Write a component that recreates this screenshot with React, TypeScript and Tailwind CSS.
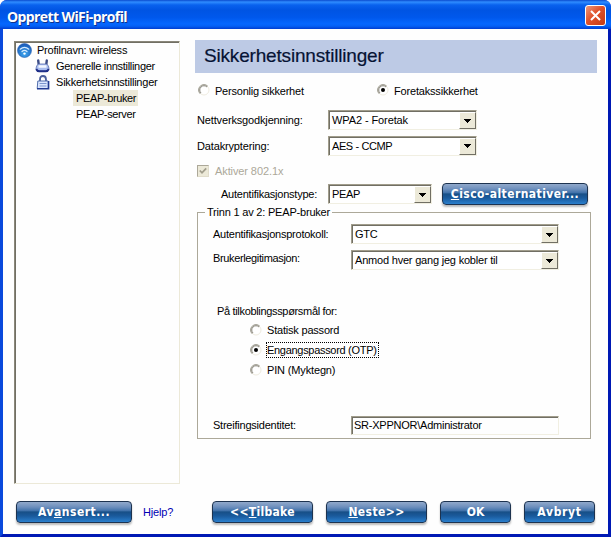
import { useState } from "react";
import type { ReactNode } from "react";
import clsx from "clsx";

function Label({ children, className }: { children: ReactNode; className?: string }) {
  return <span className={clsx("block whitespace-nowrap", className)}>{children}</span>;
}

function Select({ value, className }: { value: string; className?: string }) {
  return (
    <div
      className={clsx(
        "flex shrink-0 border border-t-[#a19d8c] border-l-[#a19d8c] border-r-[#f1efe2] border-b-[#f1efe2] bg-white",
        className
      )}
    >
      <div className="flex min-w-0 flex-1 items-center border-t border-l border-[#716f64] pl-[2px]">
        <span className="flex-1 whitespace-nowrap">{value}</span>
        <span className="flex h-full w-[17px] items-center justify-center border border-t-white border-l-white border-r-[#716f64] border-b-[#716f64] bg-[#ece9d8]">
          <svg width="7" height="4" viewBox="0 0 7 4" shapeRendering="crispEdges">
            <path d="M0 0h7v1H6v1H5v1H4v1H3V3H2V2H1V1H0z" fill="#000" />
          </svg>
        </span>
      </div>
    </div>
  );
}

type RadioProps = {
  label: string;
  checked: boolean;
  onSelect: () => void;
  className?: string;
  focused?: boolean;
};

function Radio({ label, checked, onSelect, className, focused }: RadioProps) {
  return (
    <button type="button" onClick={onSelect} className={clsx("flex items-center", className)}>
      <svg width="12" height="12" viewBox="0 0 12 12" className="mb-px shrink-0">
        <circle cx="6" cy="6" r="5" fill="#fff" stroke="#eeebdf" />
        <path d="M2.2 9.8A5.3 5.3 0 0 1 9.8 2.2" fill="none" stroke="#99978b" />
        <path d="M3 9A4.2 4.2 0 0 1 9 3" fill="none" stroke="#6d6b61" strokeWidth=".8" />
        {checked && <circle cx="6" cy="6" r="2" fill="#000" />}
      </svg>
      <span
        className={clsx(
          "ml-[4px] whitespace-nowrap pr-px leading-[14px]",
          focused ? "border border-dotted border-black" : "border border-transparent"
        )}
      >
        {label}
      </span>
    </button>
  );
}

function GlossyButton({ children, className }: { children: ReactNode; className?: string }) {
  return (
    <button
      type="button"
      className={clsx(
        "flex h-[22px] shrink-0 items-center justify-center whitespace-nowrap rounded-[4px] border border-[#1d3350] bg-[linear-gradient(#91a9cb_0%,#6d8fbd_25%,#4273ab_43%,#174f87_50%,#1a5a9c_70%,#2a7fcd_100%)] font-['DejaVu_Sans_Condensed','DejaVu_Sans',sans-serif] text-[12px] font-bold text-white shadow-[0_2px_2px_#bbb]",
        className
      )}
    >
      {children}
    </button>
  );
}

function WifiIcon() {
  return (
    <svg width="15" height="15" viewBox="0 0 15 15">
      <defs>
        <radialGradient id="ball" cx=".5" cy=".75" r=".7">
          <stop offset="0" stopColor="#3ba5ee" />
          <stop offset="1" stopColor="#1a5cba" />
        </radialGradient>
      </defs>
      <circle cx="7.5" cy="7.5" r="7" fill="url(#ball)" stroke="#2860b0" strokeWidth=".6" />
      <g fill="none" stroke="#d4eaff" strokeWidth="1.2" strokeLinecap="round">
        <path d="M3.2 6.2Q7.5 2.4 11.8 6.2" />
        <path d="M5 8.5Q7.5 6.2 10 8.5" />
      </g>
      <circle cx="7.5" cy="10.6" r="1.2" fill="#fff" />
    </svg>
  );
}

function AdapterIcon() {
  return (
    <svg width="15" height="15" viewBox="0 0 15 15">
      <path
        d="M3.2 1.5l.6 4.500M11.800 1.500l-.6 4.500"
        stroke="#3c4c86"
        strokeWidth="2.400"
        strokeLinecap="round"
      />
      <path
        d="M3.5 5h8q2.500 1.500 2.500 4.500l-1.500 2.500h-10L1 9.500q0-3 2.500-4.500z"
        fill="#a9bdf0"
        stroke="#5a70ae"
        strokeWidth=".8"
      />
      <path d="M3.500 7.500h8" stroke="#f4f8ff" strokeWidth="2.400" />
      <path d="M1.200 10q1 2.300 3 2.300h6.600q2 0 3-2.300" fill="none" stroke="#1f2f88" strokeWidth="2" />
    </svg>
  );
}

function LockIcon() {
  return (
    <svg width="14" height="15" viewBox="0 0 14 15">
      <path d="M4 7V4.500Q4 1 7 1T10 4.500V7" fill="none" stroke="#4a5f9c" strokeWidth="1.800" />
      <path d="M1.800 6h10.400v7.500H1.200z" fill="#dbe7ff" stroke="#526fac" />
      <path d="M3.500 8.500h7M3.500 11h7" stroke="#7c96cd" />
      <path d="M12.600 6v7.700H1" fill="none" stroke="#213b93" strokeWidth="1.500" />
    </svg>
  );
}

function ProfileTree() {
  return (
    <div className="h-[443px] w-[166px] shrink-0 border border-t-[#8a877a] border-l-[#8a877a] border-r-[#ece9d8] border-b-[#ece9d8]">
      <div className="h-full border-t border-l border-[#716f64]">
        <div className="flex h-[15px] items-center pl-px">
          <WifiIcon />
          <Label className="ml-[5px] tracking-[-0.23px]">Profilnavn: wireless</Label>
        </div>
        <div className="flex h-4 items-center pl-[19px]">
          <AdapterIcon />
          <Label className="ml-[6px] tracking-[-0.3px]">Generelle innstillinger</Label>
        </div>
        <div className="flex h-4 items-center pl-[20px]">
          <LockIcon />
          <Label className="ml-[6px] tracking-[-0.21px]">Sikkerhetsinnstillinger</Label>
        </div>
        <div className="flex h-4 items-center pl-[57px]">
          <Label className="bg-[#ece9d8] pr-[2px] pl-[3px] leading-4 tracking-[-0.37px]">
            PEAP-bruker
          </Label>
        </div>
        <div className="flex h-4 items-center pl-[60px]">
          <Label className="tracking-[-0.37px]">PEAP-server</Label>
        </div>
      </div>
    </div>
  );
}

export default function App() {
  const [security, setSecurity] = useState("enterprise");
  const [prompt, setPrompt] = useState("otp");

  return (
    <div className="flex h-[537px] w-[611px] flex-col overflow-hidden rounded-t-[7px] bg-[#0831d9] font-['Liberation_Sans',Arial,sans-serif] text-[11px] text-black">
      <header className="flex h-[29px] shrink-0 items-center justify-between bg-[linear-gradient(#0a4bce_0%,#2f8cff_7%,#0962ee_17%,#0054e3_35%,#0058ec_60%,#0567fe_82%,#0460f5_90%,#003dd0_100%)] pr-[5px] pl-[7px]">
        <h1 className="pt-[3px] font-['Open_Sans','Noto_Sans',sans-serif] text-[14px] font-bold tracking-[-0.6px] text-white [text-shadow:1px_1px_#10338c]">
          Opprett WiFi-profil
        </h1>
        <button
          type="button"
          className="mt-[2px] flex h-[21px] w-[21px] items-center justify-center rounded-[3px] border border-white bg-[linear-gradient(135deg,#eb987d,#e0522b_45%,#c53a14)]"
        >
          <svg width="13" height="13" viewBox="0 0 13 13">
            <path d="M2 2l9 9M11 2l-9 9" stroke="#fff" strokeWidth="2" />
          </svg>
        </button>
      </header>

      <main className="flex min-h-0 flex-1 flex-col border-x-[3px] border-b-[3px] border-l-[#0a49dc] border-r-[#0019b4] border-b-[#0019b4] bg-[#fefefe]">
        <div className="flex pl-[11px]">
          <div className="pt-[12px]">
            <ProfileTree />
          </div>

          <section className="ml-[15px] w-[402px] pt-[11px]">
            <h2 className="flex h-[33px] items-center bg-[#bdcae5] pl-[9px] text-[19px] tracking-[-0.18px] text-[#061334] [-webkit-text-stroke:0.2px_#061334]">
              Sikkerhetsinnstillinger
            </h2>

            <div className="flex h-[35px] items-center pl-[3px]">
              <Radio
                label="Personlig sikkerhet"
                checked={security === "personal"}
                onSelect={() => setSecurity("personal")}
                className="w-[179px] tracking-[-0.22px]"
              />
              <Radio
                label="Foretakssikkerhet"
                checked={security === "enterprise"}
                onSelect={() => setSecurity("enterprise")}
                className="tracking-[-0.18px]"
              />
            </div>

            <div className="flex h-6 items-center pl-[2px]">
              <Label className="w-[131px] tracking-[-0.15px]">Nettverksgodkjenning:</Label>
              <Select value="WPA2 - Foretak" className="h-5 w-[149px] tracking-[-0.1px]" />
            </div>
            <div className="flex h-[27px] items-center pl-[2px]">
              <Label className="w-[131px] pt-px tracking-[-0.15px]">Datakryptering:</Label>
              <Select value="AES - CCMP" className="h-5 w-[149px] tracking-[-0.4px]" />
            </div>

            <div className="flex h-6 items-center pl-[2px] text-[#aca899]">
              <span className="flex h-[12px] w-[12px] items-center justify-center border border-t-[#aca899] border-l-[#aca899] border-r-[#e0dccb] border-b-[#e0dccb] bg-[#ece9d8]">
                <svg width="8" height="8" viewBox="0 0 8 8">
                  <path d="M.8 3.5L3 5.8 7.2 1.4" fill="none" stroke="#a19d8c" strokeWidth="1.8" />
                </svg>
              </span>
              <Label className="ml-[6px] tracking-[-0.1px]">Aktiver 802.1x</Label>
            </div>

            <div className="flex h-[22px] items-center pl-[26px]">
              <Label className="w-[107px] tracking-[-0.23px]">Autentifikasjonstype:</Label>
              <Select value="PEAP" className="h-5 w-[104px] tracking-[-0.3px]" />
              <GlossyButton className="ml-[10px] w-[146px] tracking-[0.43px]">
                <span className="underline">C</span>isco-alternativer...
              </GlossyButton>
            </div>

            <fieldset className="ml-[2px] h-[234px] w-[394px] border border-[#aca899]">
              <legend className="ml-[7px] h-[14px] px-[2px] leading-[14px] tracking-[-0.2px]">
                Trinn 1 av 2: PEAP-bruker
              </legend>
              <div className="mt-[5px] flex h-5 items-center pl-[15px]">
                <Label className="w-[138px] tracking-[-0.24px]">Autentifikasjonsprotokoll:</Label>
                <Select value="GTC" className="h-5 w-[208px] tracking-[-0.3px]" />
              </div>
              <div className="mt-[6px] flex h-5 items-center pl-[15px]">
                <Label className="w-[138px] pb-1 tracking-[-0.36px]">Brukerlegitimasjon:</Label>
                <Select
                  value="Anmod hver gang jeg kobler til"
                  className="h-5 w-[208px] tracking-[-0.2px]"
                />
              </div>

              <Label className="mt-[33px] ml-[19px] leading-4 tracking-[-0.33px]">
                På tilkoblingsspørsmål for:
              </Label>
              <div className="flex flex-col items-start gap-[4px] pt-[3px] pl-[52px]">
                <Radio
                  label="Statisk passord"
                  checked={prompt === "static"}
                  onSelect={() => setPrompt("static")}
                  className="tracking-[-0.2px]"
                />
                <Radio
                  label="Engangspassord (OTP)"
                  checked={prompt === "otp"}
                  onSelect={() => setPrompt("otp")}
                  className="tracking-[-0.3px]"
                  focused
                />
                <Radio
                  label="PIN (Myktegn)"
                  checked={prompt === "pin"}
                  onSelect={() => setPrompt("pin")}
                  className="tracking-[-0.15px]"
                />
              </div>

              <div className="mt-[37px] flex h-5 items-center pl-[15px]">
                <Label className="w-[138px] pt-px tracking-[-0.23px]">Streifingsidentitet:</Label>
                <div className="flex h-[19px] w-[208px] border border-t-[#a19d8c] border-l-[#a19d8c] border-r-[#f1efe2] border-b-[#f1efe2]">
                  <input
                    defaultValue="SR-XPPNOR\Administrator"
                    className="w-full border-t border-l border-[#716f64] pl-px tracking-[-0.24px] outline-none"
                  />
                </div>
              </div>
            </fieldset>
          </section>
        </div>

        <footer className="mt-auto mb-[11px] flex items-center pl-[13px]">
          <GlossyButton className="w-[116px] tracking-[0.5px]">
            Av<span className="underline">a</span>nsert...
          </GlossyButton>
          <a href="#help" className="ml-[11px] w-[69px] tracking-[-0.15px] text-[#0000b4]">
            Hjelp?
          </a>
          <GlossyButton className="w-[101px] tracking-[0.3px]">
            &lt;&lt;<span className="underline">T</span>ilbake
          </GlossyButton>
          <GlossyButton className="ml-[13px] w-[101px] tracking-[0.4px]">
            <span className="underline">N</span>este&gt;&gt;
          </GlossyButton>
          <GlossyButton className="ml-[13px] w-[71px]">OK</GlossyButton>
          <GlossyButton className="ml-[13px] w-[71px] tracking-[0.7px]">Avbryt</GlossyButton>
        </footer>
      </main>
    </div>
  );
}
